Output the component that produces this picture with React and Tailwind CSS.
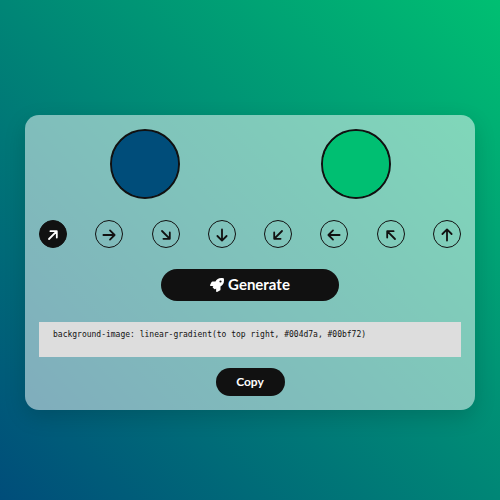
import { useState } from "react";
import { FaRocket } from "react-icons/fa";

const DIRECTIONS = [
  "top right",
  "right",
  "bottom right",
  "bottom",
  "bottom left",
  "left",
  "top left",
  "top",
];

const STRAIGHT = "M1.4 7H12.4M8 2.4 12.6 7 8 11.6";
const DIAGONAL = "M3 11 10.6 3.4M4.4 3.2H10.8V9.6";

function Arrow({ index }) {
  const diagonal = index % 2 === 0;
  const turn = diagonal ? index * 45 : (index - 1) * 45;
  return (
    <svg
      viewBox="0 0 14 14"
      className="size-3.5"
      fill="none"
      stroke="currentColor"
      strokeWidth="1.8"
      strokeLinecap="round"
      strokeLinejoin="round"
      aria-hidden="true"
    >
      <path d={diagonal ? DIAGONAL : STRAIGHT} transform={`rotate(${turn} 7 7)`} />
    </svg>
  );
}

function ColorPicker({ label, value, onChange }) {
  return (
    <input
      type="color"
      aria-label={label}
      value={value}
      onChange={(e) => onChange(e.target.value)}
      style={{ backgroundColor: value }}
      className="size-[70px] cursor-pointer appearance-none rounded-full border-2 border-[#111] p-0 [&::-webkit-color-swatch-wrapper]:p-0 [&::-webkit-color-swatch]:rounded-full [&::-webkit-color-swatch]:border-0"
    />
  );
}

const randomColor = () =>
  "#" + Math.floor(Math.random() * 0x1000000).toString(16).padStart(6, "0");

export default function App() {
  const [from, setFrom] = useState("#004d7a");
  const [to, setTo] = useState("#00bf72");
  const [active, setActive] = useState(0);
  const gradient = `linear-gradient(to ${DIRECTIONS[active]}, ${from}, ${to})`;
  const css = `background-image: ${gradient}`;

  const generate = () => {
    setFrom(randomColor());
    setTo(randomColor());
  };

  return (
    <main
      className="flex min-h-screen items-center justify-center pt-6 font-['Lato',sans-serif] text-[#111]"
      style={{ backgroundImage: gradient }}
    >
      <section className="flex w-9/10 max-w-xl flex-col items-center rounded-[14px] bg-white/50 p-3.5 shadow-[0_7px_21px_rgba(0,0,0,0.15)]">
        <div className="flex w-full justify-around">
          <ColorPicker label="Start color" value={from} onChange={setFrom} />
          <ColorPicker label="End color" value={to} onChange={setTo} />
        </div>

        <div className="mt-[21px] flex w-full justify-between">
          {DIRECTIONS.map((name, i) => (
            <button
              key={name}
              type="button"
              aria-label={`To ${name}`}
              aria-pressed={i === active}
              onClick={() => setActive(i)}
              className={`flex size-7 items-center justify-center rounded-full border border-[#111] pt-0.5 ${
                i === active ? "bg-[#111] text-white" : "text-[#111]"
              }`}
            >
              <Arrow index={i} />
            </button>
          ))}
        </div>

        <button
          type="button"
          onClick={generate}
          className="mt-[21px] flex h-8 w-[42%] items-center justify-center gap-1 rounded-full bg-[#111] text-[15px] font-bold text-white"
        >
          <FaRocket className="size-3.5" aria-hidden="true" />
          Generate
        </button>

        <code className="mt-[21px] block min-h-[35px] w-full bg-[#ddd] px-3.5 py-2 font-['DejaVu_Sans_Mono',monospace] text-[8px] leading-[10px]">
          {css}
        </code>

        <button
          type="button"
          onClick={() => navigator.clipboard?.writeText(css)}
          className="mt-[11px] h-7 w-[69px] rounded-full bg-[#111] text-[12px] font-bold text-white"
        >
          Copy
        </button>
      </section>
    </main>
  );
}
